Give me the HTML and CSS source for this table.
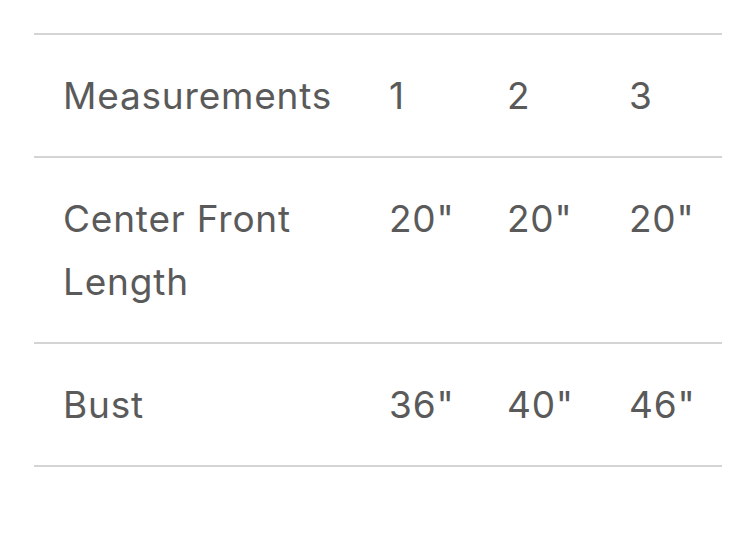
FILE: index.html
```html
<!DOCTYPE html>
<html>
<head>
<meta charset="utf-8">
<link rel="stylesheet" href="styles.css">
</head>
<body>
<div class="wrap">
<table class="sizes">
  <colgroup><col class="c-label"><col class="c-1"><col class="c-2"><col class="c-3"></colgroup>
  <tr><td class="label">Measurements</td><td>1</td><td>2</td><td>3</td></tr>
  <tr><td class="label">Center Front Length</td><td>20"</td><td>20"</td><td>20"</td></tr>
  <tr><td class="label">Bust</td><td>36"</td><td>40"</td><td>46"</td></tr>
</table>
</div>
</body>
</html>
```
FILE: styles.css
```css
html, body { margin: 0; padding: 0; background: #fff; }
.wrap { padding: 33px 28px 0 34px; }
.sizes {
  width: 688px;
  table-layout: fixed;
  border-collapse: collapse;
  font-family: "Inter", "Liberation Sans", sans-serif;
  font-size: 37px;
  line-height: 63px;
  letter-spacing: 0.8px;
  color: #5a5a5a;
}
.c-label { width: 326px; }
.c-1 { width: 118px; }
.c-2 { width: 122px; }
.c-3 { width: 122px; }
.sizes tr { border-top: 2px solid #d4d4d4; border-bottom: 2px solid #d4d4d4; }
.sizes td { padding: 29px 0 29px 29px; vertical-align: top; text-align: left; }
.sizes td.label { padding-right: 20px; }
```
